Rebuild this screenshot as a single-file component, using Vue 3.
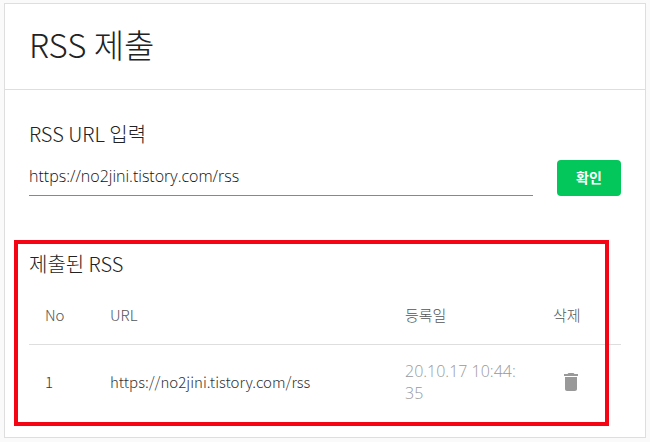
<script setup>
import { ref } from 'vue'

const url = ref('https://no2jini.tistory.com/rss')
const feeds = ref([
  { no: 1, url: 'https://no2jini.tistory.com/rss', date: '20.10.17 10:44:35' },
])

function submit() {
  feeds.value.push({ no: feeds.value.length + 1, url: url.value, date: '' })
}
function remove(no) {
  feeds.value = feeds.value.filter((feed) => feed.no !== no)
}
</script>

<template>
  <main class="card">
    <header class="card-header">
      <h1>RSS 제출</h1>
    </header>
    <div class="card-body">
      <form class="submit" @submit.prevent="submit">
        <label for="rss-url">RSS URL 입력</label>
        <div class="submit-row">
          <input id="rss-url" v-model="url" type="text" />
          <button class="confirm" type="submit">확인</button>
        </div>
      </form>

      <section class="feeds">
        <h2 id="feeds-title">제출된 RSS</h2>
        <table aria-labelledby="feeds-title">
          <colgroup>
            <col class="col-no" />
            <col />
            <col class="col-date" />
            <col class="col-delete" />
          </colgroup>
          <thead>
            <tr>
              <th>No</th>
              <th>URL</th>
              <th>등록일</th>
              <th>삭제</th>
            </tr>
          </thead>
          <tbody>
            <tr v-for="feed in feeds" :key="feed.no">
              <td>{{ feed.no }}</td>
              <td>{{ feed.url }}</td>
              <td class="date">{{ feed.date }}</td>
              <td>
                <button class="delete" type="button" aria-label="삭제" @click="remove(feed.no)">
                  <svg viewBox="0 0 24 24" width="24" height="24" aria-hidden="true">
                    <path d="M6 19c0 1.1.9 2 2 2h8c1.100 0 2-.9 2-2V7H6v12zM19 4h-3.500l-1-1h-5l-1 1H5v2h14V4z" />
                  </svg>
                </button>
              </td>
            </tr>
          </tbody>
        </table>
        <div class="highlight"></div>
      </section>
    </div>
  </main>
</template>

<style>
body {
  background: #fafafa;
}
</style>

<style scoped>
.card {
  margin: 3px 4px 4px;
  border: 1px solid #dedede;
  background: #fff;
  color: #222;
  font-family: "Noto Sans CJK KR", sans-serif;
  font-size: 15px;
  font-weight: 300;
  line-height: 22px;
}
.card-header {
  padding: 18px 24px 22px;
  border-bottom: 1px solid #dedede;
}
h1 {
  margin: 0;
  font-size: 33px;
  font-weight: 300;
  line-height: 45px;
}
.card-body {
  padding: 30px 24px 18px;
}
.submit label,
h2 {
  display: block;
  margin: 0;
  font-size: 20px;
  font-weight: 300;
  line-height: 28px;
}
.submit-row {
  display: flex;
  align-items: center;
  gap: 24px;
  margin-top: 12px;
}
input {
  flex: 1;
  min-width: 0;
  height: 36px;
  box-sizing: border-box;
  padding: 0 0 4px;
  border: 0;
  border-bottom: 1px solid #888;
  border-radius: 0;
  background: transparent;
  color: #111;
  font: inherit;
  font-family: "Open Sans", "Noto Sans CJK KR", sans-serif;
  font-size: 16px;
  outline: none;
}
.confirm {
  width: 64px;
  height: 36px;
  padding: 0 0 2px;
  border: 0;
  border-radius: 4px;
  background: #03c75a;
  color: #fff;
  font: inherit;
  font-size: 14px;
  font-weight: 700;
}
.feeds {
  position: relative;
  margin-top: 54px;
}
table {
  width: 100%;
  margin-top: 8px;
  border-collapse: collapse;
  table-layout: fixed;
}
.col-no {
  width: 65px;
}
.col-date {
  width: 148px;
}
.col-delete {
  width: 84px;
}
th,
td {
  padding: 0 16px;
  font-weight: 300;
  text-align: left;
}
th {
  height: 58px;
  border-bottom: 1px solid #dedede;
  color: #555;
}
td {
  height: 74px;
  color: #333;
}
.date {
  color: #999;
  font-family: "Open Sans", "Noto Sans CJK KR", sans-serif;
  font-size: 16px;
  word-break: break-all;
}
.delete {
  display: block;
  width: 36px;
  height: 24px;
  padding: 0 6px;
  border: 0;
  background: none;
}
.delete svg {
  display: block;
  fill: #999;
}
.highlight {
  position: absolute;
  inset: -10px 12px -7px -15px;
  border: 4px solid #f50514;
  pointer-events: none;
}
</style>
